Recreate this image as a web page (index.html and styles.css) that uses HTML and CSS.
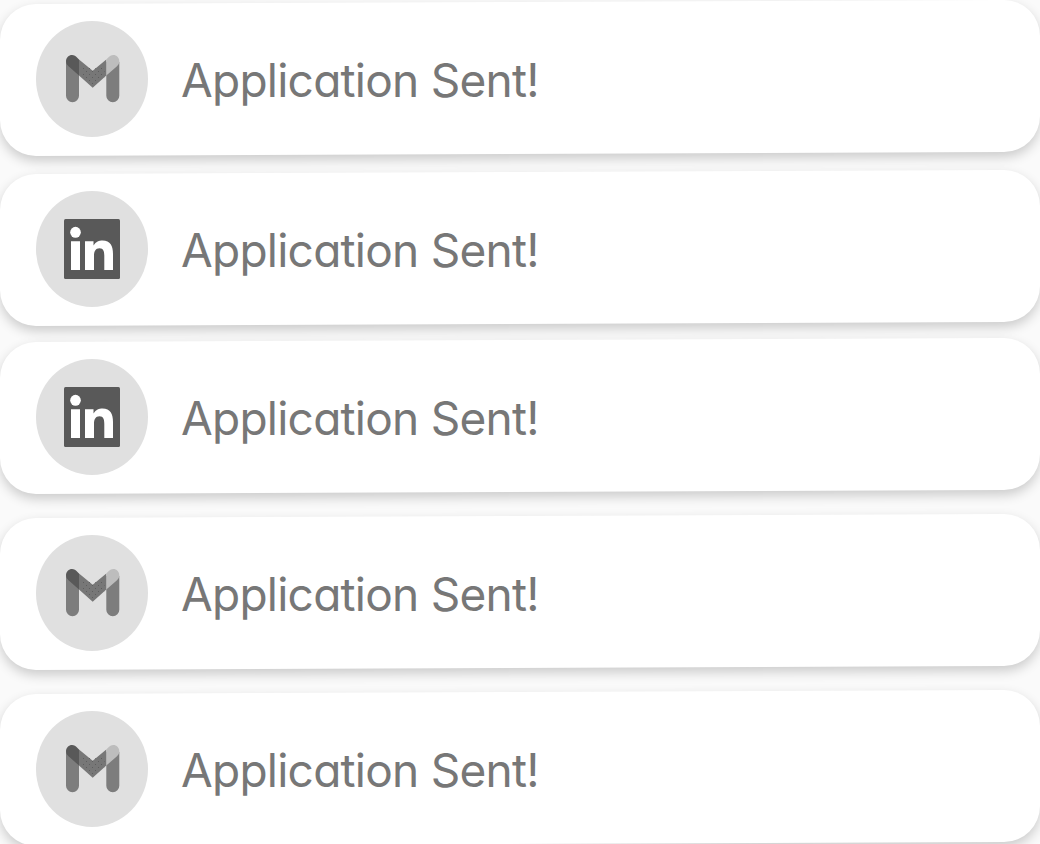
FILE: index.html
```html
<!DOCTYPE html>
<html lang="en">
<head>
    <meta charset="UTF-8">
    <meta name="viewport" content="width=device-width, initial-scale=1.0">
    <title>Applications</title>
    <link rel="stylesheet" href="styles.css">
</head>
<body>
    <svg class="symbols" width="0" height="0">
        <defs>
            <pattern id="dots" width="6" height="6" patternUnits="userSpaceOnUse">
                <rect x="1" y="1" width="1" height="1" fill="#5e5e5e"/>
                <rect x="4" y="4" width="1" height="1" fill="#5e5e5e"/>
            </pattern>
        </defs>
        <symbol id="gmail" viewBox="0 0 56 60">
            <path d="M2 13V46.700a6.500 6.500 0 0 0 13 0V13zM42.300 13V46.700a6.500 6.500 0 0 0 13 0V13z" fill="#7d7d7d"/>
            <path d="M15 10.500L28.700 21.800L42.300 10.500V26.500L28.700 38.800L15 26.500z" fill="#777"/>
            <path d="M17 19H25.500L28.700 21.800L32 19H40.500V28L28.700 38.800L17 28z" fill="url(#dots)"/>
            <path d="M2 12.500C2 6 9.500 3.500 13.500 9L15 10.500V26.500L4.500 17.300Q2 15.500 2 12.500z" fill="#595959"/>
            <path d="M55.300 12.500C55.300 6 48 3.500 43.800 9L42.300 10.500V26.500L53 17.300Q55.300 15.500 55.300 12.500z" fill="#bdbdbd"/>
        </symbol>
        <symbol id="linkedin" viewBox="0 0 56 60">
            <rect width="56" height="60" rx="1.5" fill="#595959"/>
            <ellipse cx="11.500" cy="13.300" rx="5.300" ry="5.500" fill="#fff"/>
            <path d="M7 22.300H16V51H7zM21 22.300H29.500V26.500C32 22.500 35 21.500 38.500 21.500C46.500 21.500 49 27 49 35V51H40.300V37C40.300 32.500 39.500 29.300 35.500 29.300C31.500 29.300 30 32.500 30 37V51H21z" fill="#fff"/>
        </symbol>
    </svg>

    <div class="list">
        <div class="card">
            <div class="card-content">
                <div class="avatar"><svg class="icon"><use href="#gmail"/></svg></div>
                <div class="text">Application Sent!</div>
            </div>
        </div>
        <div class="card">
            <div class="card-content">
                <div class="avatar"><svg class="icon"><use href="#linkedin"/></svg></div>
                <div class="text">Application Sent!</div>
            </div>
        </div>
        <div class="card">
            <div class="card-content">
                <div class="avatar"><svg class="icon"><use href="#linkedin"/></svg></div>
                <div class="text">Application Sent!</div>
            </div>
        </div>
        <div class="card spaced">
            <div class="card-content">
                <div class="avatar"><svg class="icon"><use href="#gmail"/></svg></div>
                <div class="text">Application Sent!</div>
            </div>
        </div>
        <div class="card spaced">
            <div class="card-content">
                <div class="avatar"><svg class="icon"><use href="#gmail"/></svg></div>
                <div class="text">Application Sent!</div>
            </div>
        </div>
    </div>
</body>
</html>
```
FILE: styles.css
```css
body {
    margin: 0;
    background-color: #fafafa;
    font-family: Inter, "Liberation Sans", sans-serif;
    overflow: hidden;
}
.symbols {
    display: block;
}
.list {
    padding-top: 2px;
}
.card {
    height: 152px;
    margin-bottom: 17.5px;
    border-radius: 36px;
    background-color: #fff;
    box-shadow: 0 5px 12px rgba(0, 0, 0, 0.19);
    transform: skewY(-0.23deg);
}
.card:nth-child(2) {
    margin-bottom: 16px;
}
.card.spaced {
    margin-top: 24px;
}
.card:nth-child(3),
.card:nth-child(4) {
    margin-bottom: 0;
}
/* cancels the tilt so only the card edge is slanted */
.card-content {
    display: flex;
    align-items: center;
    height: 153px;
    padding-left: 36px;
    transform-origin: 50% 76px;
    transform: skewY(0.23deg);
}
.avatar {
    display: flex;
    align-items: center;
    justify-content: center;
    width: 112px;
    height: 116px;
    border-radius: 50%;
    background-color: #e0e0e0;
}
.icon {
    width: 56px;
    height: 60px;
}
.text {
    margin-left: 33px;
    padding-top: 3px;
    color: #777;
    font-size: 46px;
    line-height: 56px;
    letter-spacing: -0.75px;
    white-space: nowrap;
    font-feature-settings: "cv11";
}
```
